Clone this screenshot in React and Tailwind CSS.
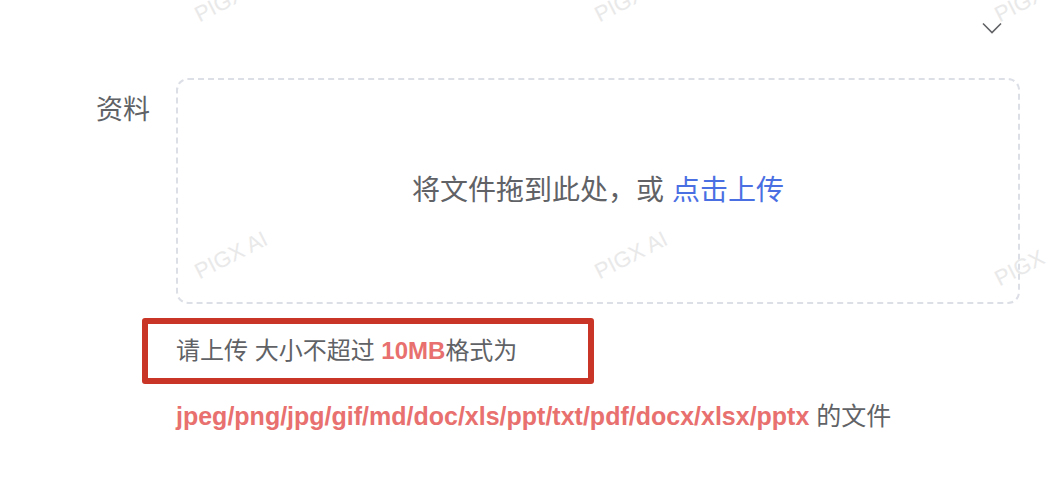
const marks = [
  { x: 231, y: -2 },
  { x: 631, y: -2 },
  { x: 1031, y: -2 },
  { x: 231, y: 255 },
  { x: 631, y: 255 },
  { x: 1031, y: 262 },
];

function Watermarks() {
  return (
    <div className="pointer-events-none absolute inset-0 overflow-hidden">
      {marks.map((m, i) => (
        <div
          key={i}
          className="absolute -translate-x-1/2 -translate-y-1/2 rotate-[-27deg] whitespace-nowrap text-[22px] font-['Liberation_Sans',sans-serif] text-[#e9e9e9]"
          style={{ left: m.x, top: m.y }}
        >
          PIGX AI
        </div>
      ))}
    </div>
  );
}

export default function App() {
  return (
    <div className="relative h-[480px] w-[1048px] overflow-hidden bg-white font-['Liberation_Sans','Noto_Sans_CJK_SC',sans-serif] text-[#606266]">
      {/* 上一项的下拉箭头 */}
      <div className="flex h-[78px] justify-end pr-[46px] pt-[22px]">
        <svg width="20" height="12" viewBox="0 0 20 12" fill="none">
          <path d="M1 1.5 L10 10.5 L19 1.5" stroke="#606266" strokeWidth="1.6" />
        </svg>
      </div>

      {/* 资料 */}
      <div className="flex">
        <div className="w-[176px] pr-[26px] pt-[15px] text-right text-[27px] leading-[34px]">资料</div>
        <div className="flex h-[226px] w-[844px] items-center justify-center rounded-[12px] border-2 border-dashed border-[#dcdfe6]">
          <span className="text-[28px] leading-[34px]">
            将文件拖到此处，或 <span className="text-[#4a6fe3]">点击上传</span>
          </span>
        </div>
      </div>

      {/* 提示 */}
      <div className="ml-[142px] mt-[14px] flex h-[66px] w-[452px] items-center rounded-[3px] border-[6px] border-[#c93526] pl-[28px] text-[24px]">
        <span>
          请上传 大小不超过 <b className="font-bold text-[#e8706e]">10MB</b>格式为
        </span>
      </div>
      <div className="ml-[176px] mt-[16px] text-[25px] leading-[32px]">
        <b className="font-bold text-[#e8706e]">jpeg/png/jpg/gif/md/doc/xls/ppt/txt/pdf/docx/xlsx/pptx</b> 的文件
      </div>

      <Watermarks />
    </div>
  );
}
